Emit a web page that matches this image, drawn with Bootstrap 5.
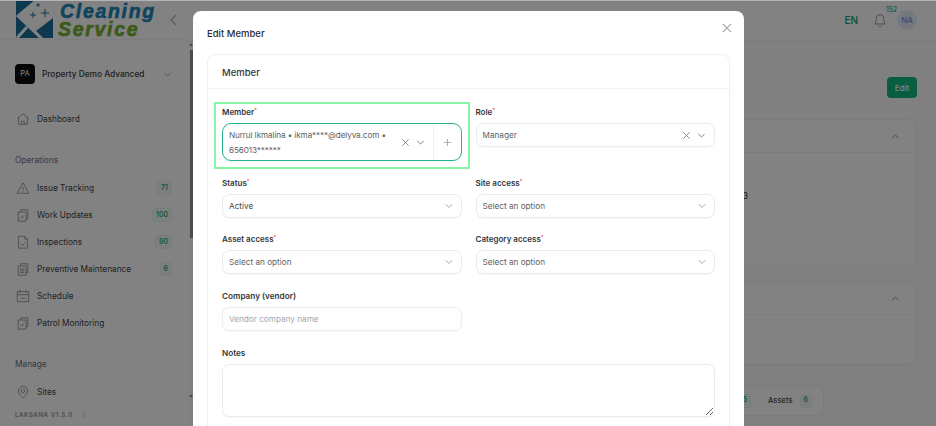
<!DOCTYPE html>
<html lang="en">
<head>
    <meta charset="UTF-8">
    <meta name="viewport" content="width=device-width, initial-scale=1.0">
    <title>Edit Member</title>
    <link href="https://cdn.jsdelivr.net/npm/bootstrap@5.3.0/dist/css/bootstrap.min.css" rel="stylesheet">
    <style>
        :root {
            --brand-green: #0aa06e;
            --line: #eceef1;
            --text-dark: #2f3338;
        }

        html, body {
            height: 100%;
            overflow: hidden;
        }

        body {
            font-family: "Inter", "Noto Sans", sans-serif;
            font-size: 8.3px;
            background-color: #fbfbfb;
            color: var(--text-dark);
        }

        .app-shell {
            height: 426px;
        }

        /* sidebar */
        .side-panel {
            width: 190px;
            flex: 0 0 190px;
            height: 426px;
            background-color: #ffffff;
        }

        .logo-row {
            height: 40px;
            padding-left: 15px;
            border-bottom: 1px solid #f5f5f5;
        }

        .logo-words {
            margin: 2px 0 0 6px;
            width: 109px;
            font-family: "Liberation Sans", sans-serif;
            font-weight: 700;
            font-style: italic;
            font-size: 19.5px;
            line-height: 17.5px;
            letter-spacing: 1.7px;
            -webkit-text-stroke: .6px currentColor;
        }

        .logo-blue { color: #1f86b5; }
        .logo-green { color: #74b02e; margin-left: -2px; }

        .org-row {
            height: 20px;
            margin: 24px 15px 0;
        }

        .org-mark {
            width: 20px;
            height: 20px;
            border-radius: 4px;
            background-color: #0c0c0c;
            color: #fff;
            font-size: 7.5px;
            margin-right: 7px;
        }

        .org-name {
            font-weight: 500;
            color: #3a3d42;
            width: 121px;
            padding-top: 1px;
            white-space: nowrap;
        }

        .side-link {
            height: 27px;
            padding: 0 18px 0 16px;
            color: #3f4349;
            white-space: nowrap;
        }

        .side-link svg {
            width: 14px;
            height: 14px;
            margin-right: 7px;
            flex: none;
        }

        .side-link-first {
            margin-top: 21.5px;
        }

        .side-group {
            padding-left: 15px;
            height: 14px;
            margin: 20.5px 0 7.5px;
            color: #6e7278;
        }

        .side-count {
            height: 14px;
            min-width: 12px;
            padding: 0 3px;
            border-radius: 3px;
            border: 1px solid #e8f5f0;
            background-color: #f1f9f6;
            color: #11a374;
            font-size: 7px;
            font-weight: 500;
        }

        .side-foot {
            padding-left: 15px;
            margin-top: 4.5px;
            font-size: 6px;
            font-weight: 700;
            letter-spacing: .6px;
            color: #9b9ea3;
        }

        /* page behind the modal */
        .main-side {
            min-width: 0;
        }

        .top-strip {
            height: 41px;
            padding-right: 19px;
            background-color: #ffffff;
            border-bottom: 1px solid #f3f3f3;
        }

        .lang-tag {
            color: var(--brand-green);
            font-size: 10px;
            font-weight: 500;
            margin-right: 13px;
        }

        .bell-box {
            width: 18px;
            margin-right: 8px;
        }

        .bell-count {
            position: absolute;
            top: -7px;
            left: 15px;
            color: var(--brand-green);
            font-size: 7px;
        }

        .user-dot {
            width: 20px;
            height: 20px;
            border-radius: 50%;
            background-color: #e6ebf8;
            color: #7b8fce;
            font-size: 8px;
            font-weight: 500;
        }

        .page-body {
            padding: 36px 19px 0 15px;
        }

        .edit-btn {
            width: 30px;
            height: 21px;
            padding: 0;
            font-size: 8px;
            font-weight: 500;
            border: 0;
            border-radius: 4px;
            background-color: #12b980;
            color: #fff;
        }

        .bg-panel {
            border: 1px solid #f2f2f2;
            border-radius: 7px;
            background-color: #ffffff;
        }

        .bg-panel-one {
            height: 147px;
            margin-top: 21px;
        }

        .bg-panel-two {
            height: 84px;
            margin-top: 15px;
        }

        .bg-panel-head {
            height: 33px;
            padding-right: 16px;
            border-bottom: 1px solid #f4f4f4;
        }

        .bg-panel-value {
            width: 542px;
            padding-top: 37px;
            text-align: right;
            font-size: 8.5px;
        }

        .tab-strip {
            width: 180px;
            height: 31px;
            margin-left: 439px;
            margin-top: 20px;
            padding-right: 11px;
            border: 1px solid #f2f2f2;
            border-radius: 7px;
            background-color: #ffffff;
            color: #4a4e55;
            font-size: 7.6px;
            font-weight: 500;
        }

        .tab-gap {
            margin-right: 17px;
        }

        .tab-count {
            margin-left: 7px;
        }

        /* dim layer and modal */
        .dim-layer {
            position: fixed;
            inset: 0;
            background-color: rgba(0, 0, 0, .49);
            border-top: 1px solid #b4b4b4;
        }

        .fake-scroll {
            position: fixed;
            left: 190px;
            top: 50px;
            width: 3px;
            height: 188px;
            background-color: #4c4c4c;
        }

        .fake-scroll::before,
        .fake-scroll::after {
            content: "";
            position: absolute;
            left: -1px;
            border-left: 2.5px solid transparent;
            border-right: 2.5px solid transparent;
        }

        .fake-scroll::before {
            top: -7px;
            border-bottom: 3px solid #4c4c4c;
        }

        .fake-scroll::after {
            top: 345px;
            border-top: 3px solid #4c4c4c;
        }

        .edit-modal {
            position: fixed;
            left: 193px;
            top: 11px;
            width: 551px;
            height: 500px;
            background-color: #fff;
            border-radius: 8px;
            padding: 0 14px;
        }

        .edit-head {
            height: 43px;
            padding-top: 1px;
            font-size: 9.5px;
            font-weight: 500;
            color: #2b2e33;
        }

        .edit-title {
            padding-top: 15px;
        }

        .edit-close {
            width: 12px;
            height: 12px;
            margin: 10px -3px 0 0;
        }

        .form-panel {
            border: 1px solid var(--line);
            border-radius: 8px;
        }

        .form-panel-head {
            height: 34px;
            padding: 3px 0 0 14px;
            font-size: 9.5px;
            font-weight: 500;
            color: #34373c;
            border-bottom: 1px solid #f1f2f4;
        }

        .form-panel-body {
            padding: 17px 14px;
        }

        .field-grid {
            --bs-gutter-x: 14px;
            --bs-gutter-y: 15.7px;
        }

        .field-label {
            display: block;
            height: 13px;
            line-height: 13px;
            margin-bottom: 4px;
            font-size: 8px;
            font-weight: 600;
            color: #33363b;
        }

        .field-label-plain {
            font-size: 8.2px;
        }

        .field-label sup {
            color: #ef4444;
            font-size: 5px;
            top: -.6em;
        }

        .field-marked {
            position: relative;
        }

        .field-marked::after {
            content: "";
            position: absolute;
            top: -4px;
            bottom: -8px;
            left: -8px;
            right: -8px;
            border: 2px solid #88f5a6;
            pointer-events: none;
        }

        .pick-box {
            min-height: 24px;
            border: 1px solid #eaecef;
            border-radius: 7px;
            color: #5d6167;
            font-size: 8.2px;
            line-height: 14.5px;
            box-shadow: 0 1px 1px rgba(0, 0, 0, .03);
        }

        .pick-box-open {
            height: 38px;
            border: 1.5px solid #24b28a;
            border-radius: 9px;
        }

        .pick-text {
            padding: 1px 6px 0;
            flex: 1 1 auto;
            min-width: 0;
        }

        .pick-text-long {
            letter-spacing: -.12px;
        }

        .pick-tools {
            gap: 6px;
            padding-right: 8px;
        }

        .pick-add {
            width: 28px;
            flex: none;
            border-left: 1px solid #f0f1f3;
        }

        .pick-ico {
            width: 9px;
            height: 9px;
            flex: none;
        }

        .form-select.plain-pick,
        .form-control.plain-input {
            height: 24px;
            min-height: 24px;
            padding: 0 6px;
            font-size: 8.2px;
            color: #5d6167;
            border: 1px solid #eaecef;
            border-radius: 7px;
            box-shadow: 0 1px 1px rgba(0, 0, 0, .03);
        }

        .form-select.plain-pick {
            background-position: right 8px center;
            background-size: 8px 6px;
            background-image: url("data:image/svg+xml,%3csvg xmlns='http://www.w3.org/2000/svg' viewBox='0 0 16 12'%3e%3cpath fill='none' stroke='%239a9ea5' stroke-linecap='round' stroke-linejoin='round' stroke-width='1.8' d='M2 3l6 6 6-6'/%3e%3c/svg%3e");
        }

        .form-select.pick-filled {
            color: #43464b;
        }

        .form-control.plain-input::placeholder {
            color: #a3a7ad;
        }

        .form-control.notes-input {
            height: 53px;
        }
    </style>
</head>
<body>
    <svg width="0" height="0" class="position-absolute">
        <defs>
            <symbol id="i-home" viewBox="0 0 16 16"><path d="M1.5 7.5 8 2l6.5 5.5M3 6.5V14h10V6.5M6.5 14v-3.5h3V14" fill="none" stroke="currentColor" stroke-width=".9"/></symbol>
            <symbol id="i-warn" viewBox="0 0 16 16"><path d="M8 2 1.2 14h13.6zM8 6.5v4M8 11.8v.8" fill="none" stroke="currentColor" stroke-width=".9" stroke-linejoin="round"/></symbol>
            <symbol id="i-clip" viewBox="0 0 16 16"><path d="M5.5 4V2h8v10h-2M2.5 4.5h9V15h-9zM5 10l1.5 1.5L9 8.5" fill="none" stroke="currentColor" stroke-width=".9"/></symbol>
            <symbol id="i-file" viewBox="0 0 16 16"><path d="M3 1.5h7l3 3V15H3zM10 1.5v3h3M5.5 10l2 2 3-3.5" fill="none" stroke="currentColor" stroke-width=".9"/></symbol>
            <symbol id="i-list" viewBox="0 0 16 16"><path d="M5.5 4V2h8v10h-2M2.5 4.5h9V15h-9zM4.5 8h5M4.5 10h5M4.5 12h5" fill="none" stroke="currentColor" stroke-width=".9"/></symbol>
            <symbol id="i-cal" viewBox="0 0 16 16"><path d="M1.5 3h13v11.5h-13zM1.5 6.5h13M4.5 1.5v3M11.5 1.5v3M5 10.5h6" fill="none" stroke="currentColor" stroke-width=".9"/></symbol>
            <symbol id="i-pin" viewBox="0 0 16 16"><path d="M8 15S2.8 10.5 2.8 6.5a5.2 5.2 0 0 1 10.4 0C13.2 10.5 8 15 8 15z" fill="none" stroke="currentColor" stroke-width=".9"/><circle cx="8" cy="6.5" r="2.2" fill="none" stroke="currentColor" stroke-width=".9"/></symbol>
            <symbol id="i-down" viewBox="0 0 10 10"><path d="M1.5 3.2 5 6.7l3.5-3.5" fill="none" stroke="currentColor" stroke-width="1.1"/></symbol>
            <symbol id="i-x" viewBox="0 0 10 10"><path d="M1.5 1.5l7 7M8.5 1.5l-7 7" fill="none" stroke="currentColor" stroke-width="1"/></symbol>
        </defs>
    </svg>

    <div class="app-shell d-flex">
        <aside class="side-panel">
            <div class="logo-row d-flex align-items-center">
                <svg width="39" height="39" viewBox="0 0 39 39">
                    <path d="M1 0h19L3 14l23 24H1zM38 18v20H28l-7-7z" fill="#1b6f9e"/>
                    <path d="M2 38 12 27" stroke="#fff" stroke-width="3"/>
                    <path d="M2 15 26 38" stroke="#fff" stroke-width="3"/>
                    <path d="M18 12v6M15 15h6M30 9v8M26 13h8M23 3v4M21 5h4" stroke="#1b6f9e" stroke-width="1"/>
                </svg>
                <div class="logo-words">
                    <div class="logo-blue">Cleaning</div>
                    <div class="logo-green">Service</div>
                </div>
                <svg width="10" height="12" viewBox="0 0 10 12" color="#a9adb3"><path d="M7 1 2 6l5 5" fill="none" stroke="currentColor" stroke-width="1.1"/></svg>
            </div>

            <div class="org-row d-flex align-items-center">
                <div class="org-mark d-flex align-items-center justify-content-center">PA</div>
                <div class="org-name">Property Demo Advanced</div>
                <svg class="pick-ico" color="#a9adb3"><use href="#i-down"/></svg>
            </div>

            <a class="side-link side-link-first d-flex align-items-center text-decoration-none" href="#"><svg color="#83878d"><use href="#i-home"/></svg>Dashboard</a>

            <div class="side-group d-flex align-items-center">Operations</div>
            <a class="side-link d-flex align-items-center text-decoration-none" href="#"><svg color="#83878d"><use href="#i-warn"/></svg>Issue Tracking<span class="side-count ms-auto d-flex align-items-center justify-content-center">71</span></a>
            <a class="side-link d-flex align-items-center text-decoration-none" href="#"><svg color="#83878d"><use href="#i-clip"/></svg>Work Updates<span class="side-count ms-auto d-flex align-items-center justify-content-center">100</span></a>
            <a class="side-link d-flex align-items-center text-decoration-none" href="#"><svg color="#83878d"><use href="#i-file"/></svg>Inspections<span class="side-count ms-auto d-flex align-items-center justify-content-center">90</span></a>
            <a class="side-link d-flex align-items-center text-decoration-none" href="#"><svg color="#83878d"><use href="#i-list"/></svg>Preventive Maintenance<span class="side-count ms-auto d-flex align-items-center justify-content-center">6</span></a>
            <a class="side-link d-flex align-items-center text-decoration-none" href="#"><svg color="#83878d"><use href="#i-cal"/></svg>Schedule</a>
            <a class="side-link d-flex align-items-center text-decoration-none" href="#"><svg color="#83878d"><use href="#i-clip"/></svg>Patrol Monitoring</a>

            <div class="side-group d-flex align-items-center">Manage</div>
            <a class="side-link d-flex align-items-center text-decoration-none" href="#"><svg color="#83878d"><use href="#i-pin"/></svg>Sites</a>
            <div class="side-foot d-flex align-items-center gap-2">LAKSANA V1.5.0
                <svg width="6" height="6" viewBox="0 0 10 10" color="#b5b8bc"><path d="M8.5 1.5 2 5l6.5 3.5" fill="none" stroke="currentColor"/></svg>
            </div>
        </aside>

        <div class="main-side flex-grow-1">
            <div class="top-strip d-flex align-items-center justify-content-end">
                <span class="lang-tag">EN</span>
                <div class="bell-box position-relative d-flex justify-content-center">
                    <svg width="16" height="16" viewBox="0 0 16 16" color="#8a8e94"><path d="M3 12c1-1.5 1.2-3 1.2-5.500a3.800 3.800 0 0 1 7.600 0c0 2.500.2 4 1.200 5.500zM6.500 14c.8.8 2.200.8 3 0" fill="none" stroke="currentColor" stroke-width=".9"/></svg>
                    <span class="bell-count">152</span>
                </div>
                <div class="user-dot d-flex align-items-center justify-content-center">NA</div>
            </div>
            <div class="page-body">
                <div class="d-flex justify-content-end"><button class="edit-btn" type="button">Edit</button></div>
                <div class="bg-panel bg-panel-one">
                    <div class="bg-panel-head d-flex align-items-center justify-content-end"><svg class="pick-ico" color="#8a8e94" transform="rotate(180)"><use href="#i-down"/></svg></div>
                    <div class="bg-panel-value">2023</div>
                </div>
                <div class="bg-panel bg-panel-two">
                    <div class="bg-panel-head d-flex align-items-center justify-content-end"><svg class="pick-ico" color="#8a8e94" transform="rotate(180)"><use href="#i-down"/></svg></div>
                </div>
                <div class="tab-strip d-flex align-items-center justify-content-end">
                    <span>Sites</span><span class="side-count tab-count tab-gap d-flex align-items-center justify-content-center">5</span>
                    <span>Assets</span><span class="side-count tab-count d-flex align-items-center justify-content-center">6</span>
                </div>
            </div>
        </div>
    </div>

    <div class="dim-layer"></div>
    <div class="fake-scroll"></div>

    <div class="edit-modal">
        <div class="edit-head d-flex align-items-start justify-content-between">
            <span class="edit-title">Edit Member</span>
            <svg class="edit-close" viewBox="0 0 10 10" color="#a3a7ad"><use href="#i-x"/></svg>
        </div>
        <div class="form-panel">
            <div class="form-panel-head d-flex align-items-center">Member</div>
            <div class="form-panel-body">
                <div class="row field-grid">
                    <div class="col-6">
                        <div class="field-marked">
                            <label class="field-label">Member<sup>*</sup></label>
                            <div class="pick-box pick-box-open d-flex align-items-stretch">
                                <div class="pick-text pick-text-long align-self-center">Nurrul Ikmalina • ikma****@delyva.com • 656013******</div>
                                <div class="pick-tools d-flex align-items-center">
                                    <svg class="pick-ico" color="#7b7f86"><use href="#i-x"/></svg>
                                    <svg class="pick-ico" color="#7b7f86"><use href="#i-down"/></svg>
                                </div>
                                <div class="pick-add d-flex align-items-center justify-content-center">
                                    <svg width="9" height="9" viewBox="0 0 10 10" color="#a3a7ad"><path d="M5 1v8M1 5h8" stroke="currentColor" fill="none"/></svg>
                                </div>
                            </div>
                        </div>
                    </div>
                    <div class="col-6">
                        <label class="field-label">Role<sup>*</sup></label>
                        <div class="pick-box d-flex align-items-center">
                            <div class="pick-text">Manager</div>
                            <div class="pick-tools d-flex align-items-center">
                                <svg class="pick-ico" color="#7b7f86"><use href="#i-x"/></svg>
                                <svg class="pick-ico" color="#7b7f86"><use href="#i-down"/></svg>
                            </div>
                        </div>
                    </div>
                    <div class="col-6">
                        <label class="field-label">Status<sup>*</sup></label>
                        <select class="form-select plain-pick pick-filled"><option>Active</option></select>
                    </div>
                    <div class="col-6">
                        <label class="field-label">Site access<sup>*</sup></label>
                        <select class="form-select plain-pick"><option>Select an option</option></select>
                    </div>
                    <div class="col-6">
                        <label class="field-label">Asset access<sup>*</sup></label>
                        <select class="form-select plain-pick"><option>Select an option</option></select>
                    </div>
                    <div class="col-6">
                        <label class="field-label">Category access<sup>*</sup></label>
                        <select class="form-select plain-pick"><option>Select an option</option></select>
                    </div>
                    <div class="col-6">
                        <label class="field-label field-label-plain">Company (vendor)</label>
                        <input class="form-control plain-input" type="text" placeholder="Vendor company name">
                    </div>
                    <div class="col-12">
                        <label class="field-label field-label-plain">Notes</label>
                        <textarea class="form-control plain-input notes-input"></textarea>
                    </div>
                </div>
            </div>
        </div>
    </div>

    <script src="https://cdn.jsdelivr.net/npm/bootstrap@5.3.0/dist/js/bootstrap.bundle.min.js"></script>
</body>
</html>
